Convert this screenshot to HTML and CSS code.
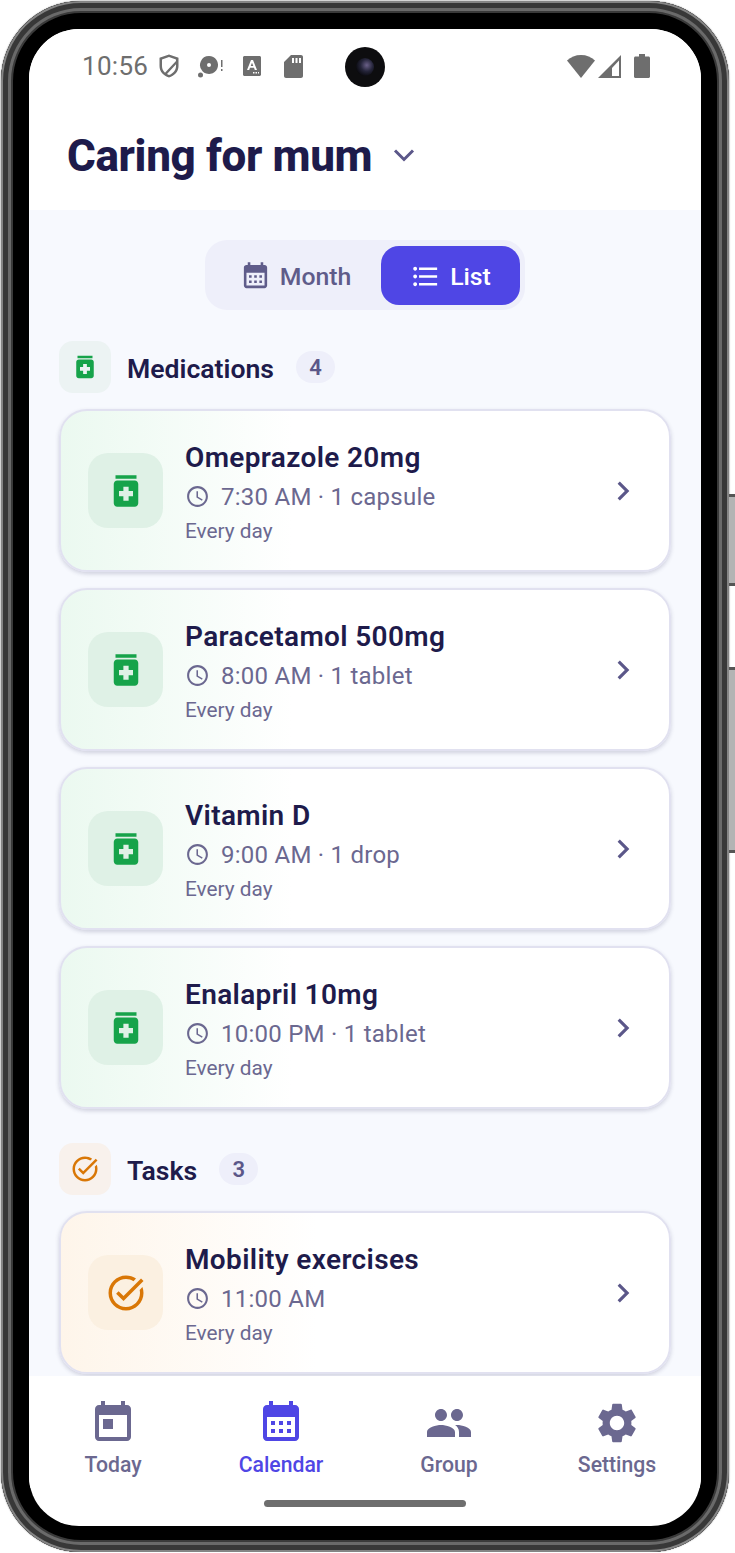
FILE: index.html
```html
<!DOCTYPE html>
<html lang="en">
<head>
  <meta charset="UTF-8" />
  <meta name="viewport" content="width=device-width, initial-scale=1.0"/>
  <title>Caring for mum</title>
  <link rel="stylesheet" href="styles.css">
</head>
<body>
  <svg class="icon-defs" aria-hidden="true">
    <symbol id="i-med" viewBox="0 0 24 24"><path d="M6 3h12v2H6zm11 3H7c-1.1 0-2 .9-2 2v11c0 1.1.9 2 2 2h10c1.1 0 2-.9 2-2V8c0-1.1-.9-2-2-2zm-1 9h-2.5v2.5h-3V15H8v-3h2.5V9.5h3V12H16v3z"/></symbol>
    <symbol id="i-task" viewBox="0 0 24 24"><path d="M22 5.18L10.59 16.6l-4.24-4.24 1.41-1.41 2.83 2.83 10-10L22 5.18zm-2.21 5.04c.13.57.21 1.17.21 1.78 0 4.42-3.58 8-8 8s-8-3.58-8-8 3.58-8 8-8c1.58 0 3.04.46 4.28 1.22l1.44-1.44C16.1 2.67 14.13 2 12 2 6.48 2 2 6.48 2 12s4.48 10 10 10 10-4.48 10-10c0-1.19-.22-2.33-.6-3.39l-1.61 1.61z"/></symbol>
    <symbol id="i-clock" viewBox="0 0 24 24"><path d="M11.99 2C6.47 2 2 6.48 2 12s4.47 10 9.99 10C17.52 22 22 17.52 22 12S17.52 2 11.99 2zM12 20c-4.42 0-8-3.58-8-8s3.58-8 8-8 8 3.58 8 8-3.58 8-8 8zm.5-13H11v6l5.25 3.15.75-1.23-4.5-2.67z"/></symbol>
    <symbol id="i-next" viewBox="0 0 24 24"><path d="M10 6L8.59 7.41 13.17 12l-4.58 4.59L10 18l6-6z"/></symbol>
    <symbol id="i-cal" viewBox="0 0 24 24"><path d="M19 3h-1V1h-2v2H8V1H6v2H5c-1.1 0-2 .9-2 2v14c0 1.1.9 2 2 2h14c1.1 0 2-.9 2-2V5c0-1.1-.9-2-2-2zm0 16H5V9h14v10zM7 11h2v2H7zm4 0h2v2h-2zm4 0h2v2h-2zM7 15h2v2H7zm4 0h2v2h-2zm4 0h2v2h-2z"/></symbol>
  </svg>

  <div class="device">
    <span class="side-btn side-btn-power"></span>
    <span class="side-btn side-btn-volume"></span>
    <div class="screen">
      <span class="camera"><span class="lens"></span></span>

      <header class="top">
        <div class="status-bar">
          <div class="status-left">
            <span class="clock">10:56</span>
            <svg class="st-shield" viewBox="0 0 22 26"><path d="M11 1.5l9.5 3.2v8.2c0 5.6-4 9.8-9.5 11.6C5.5 22.7 1.5 18.5 1.5 12.9V4.7zM4 6.5v6.4c0 2.6 1.1 5 3 6.8L18 7.9V6.4l-7-2.3zM18 11.2L9 20.9c.6.4 1.3.8 2 1.1 4.2-1.6 7-5 7-9.1z" fill-rule="evenodd"/></svg>
            <svg class="st-disc" viewBox="0 0 25 24"><path d="M11 2a9 9 0 1 1-6.5 15.2A9 9 0 0 1 11 2zm0 7a2 2 0 1 0 0 4 2 2 0 0 0 0-4z" fill-rule="evenodd"/><circle cx="2.5" cy="21" r="2.5"/><rect x="23" y="6" width="1.5" height="7"/><rect x="23" y="15" width="1.5" height="2"/></svg>
            <svg class="st-font" viewBox="0 0 18 20"><path d="M1.5 0h15c.8 0 1.5.7 1.5 1.5v17c0 .8-.7 1.5-1.5 1.5h-15C.7 20 0 19.3 0 18.500v-17C0 .7.7 0 1.5 0zM8 4l-4 10h2.2l.8-2.3h4l.8 2.3H14L10 4zm1 2.7l1.3 3.300H7.700zM10 16v1.5h1.5V16zm2.500 0v1.5H14V16zm2.500 0v1.5h1V16z" fill-rule="evenodd"/></svg>
            <svg class="st-sd" viewBox="0 0 19 23"><path d="M7 0h10c1.1 0 2 .9 2 2v19c0 1.1-.9 2-2 2H2c-1.1 0-2-.9-2-2V7zM8 3v5h2V3zm3.5 0v5h2V3zM15 3v5h2V3z" fill-rule="evenodd"/></svg>
          </div>
          <div class="status-right">
            <svg class="st-wifi" viewBox="0 0 28 23"><path d="M14 0c5.5 0 10.3 2 14 5.5L14 23 0 5.5C3.700 2 8.500 0 14 0z"/></svg>
            <svg class="st-signal" viewBox="0 0 23 23"><path d="M23 0v23H0zM21 5.5L14 13v8h7z" fill-rule="evenodd"/></svg>
            <svg class="st-battery" viewBox="0 0 16 24"><path d="M5 0h6v2.5h3.5c.8 0 1.5.7 1.5 1.5v18.500c0 .8-.7 1.500-1.500 1.500h-13C.7 24 0 23.300 0 22.500V4c0-.8.7-1.500 1.500-1.500H5z"/></svg>
          </div>
        </div>
        <div class="title-row">
          <h1>Caring for mum</h1>
          <svg class="title-caret" viewBox="0 0 22 14"><path d="M2 2.5l9 9 9-9"/></svg>
        </div>
      </header>

      <main class="content">
        <div class="segment-wrap">
          <div class="segment">
            <div class="seg-btn">
              <svg class="seg-icon"><use href="#i-cal"/></svg>
              <span>Month</span>
            </div>
            <div class="seg-btn active">
              <svg class="seg-icon" viewBox="0 0 24 24"><path d="M4 10.5c-.83 0-1.5.67-1.5 1.5s.67 1.5 1.5 1.5 1.5-.67 1.5-1.5-.67-1.5-1.5-1.5zm0-6c-.83 0-1.5.67-1.5 1.5S3.17 7.5 4 7.5 5.5 6.83 5.5 6 4.83 4.5 4 4.5zm0 12c-.83 0-1.5.68-1.5 1.5s.68 1.5 1.5 1.5 1.5-.68 1.5-1.5-.67-1.5-1.5-1.5zM7 19h14v-2H7v2zm0-6h14v-2H7v2zm0-8v2h14V5H7z"/></svg>
              <span>List</span>
            </div>
          </div>
        </div>

        <section class="section">
          <div class="section-head">
            <span class="section-icon med"><svg><use href="#i-med"/></svg></span>
            <h2>Medications</h2>
            <span class="badge">4</span>
          </div>
          <div class="card med">
            <span class="card-icon"><svg><use href="#i-med"/></svg></span>
            <div class="card-body">
              <div class="card-title">Omeprazole 20mg</div>
              <div class="card-time"><svg><use href="#i-clock"/></svg>7:30 AM · 1 capsule</div>
              <div class="card-repeat">Every day</div>
            </div>
            <svg class="card-next"><use href="#i-next"/></svg>
          </div>
          <div class="card med">
            <span class="card-icon"><svg><use href="#i-med"/></svg></span>
            <div class="card-body">
              <div class="card-title">Paracetamol 500mg</div>
              <div class="card-time"><svg><use href="#i-clock"/></svg>8:00 AM · 1 tablet</div>
              <div class="card-repeat">Every day</div>
            </div>
            <svg class="card-next"><use href="#i-next"/></svg>
          </div>
          <div class="card med">
            <span class="card-icon"><svg><use href="#i-med"/></svg></span>
            <div class="card-body">
              <div class="card-title">Vitamin D</div>
              <div class="card-time"><svg><use href="#i-clock"/></svg>9:00 AM · 1 drop</div>
              <div class="card-repeat">Every day</div>
            </div>
            <svg class="card-next"><use href="#i-next"/></svg>
          </div>
          <div class="card med">
            <span class="card-icon"><svg><use href="#i-med"/></svg></span>
            <div class="card-body">
              <div class="card-title">Enalapril 10mg</div>
              <div class="card-time"><svg><use href="#i-clock"/></svg>10:00 PM · 1 tablet</div>
              <div class="card-repeat">Every day</div>
            </div>
            <svg class="card-next"><use href="#i-next"/></svg>
          </div>
        </section>

        <section class="section">
          <div class="section-head">
            <span class="section-icon task"><svg><use href="#i-task"/></svg></span>
            <h2>Tasks</h2>
            <span class="badge">3</span>
          </div>
          <div class="card task">
            <span class="card-icon"><svg><use href="#i-task"/></svg></span>
            <div class="card-body">
              <div class="card-title">Mobility exercises</div>
              <div class="card-time"><svg><use href="#i-clock"/></svg>11:00 AM</div>
              <div class="card-repeat">Every day</div>
            </div>
            <svg class="card-next"><use href="#i-next"/></svg>
          </div>
        </section>
      </main>

      <nav class="tabbar">
        <div class="tab">
          <svg viewBox="0 0 24 24"><path d="M19 3h-1V1h-2v2H8V1H6v2H5c-1.11 0-1.99.9-1.99 2L3 19c0 1.1.89 2 2 2h14c1.1 0 2-.9 2-2V5c0-1.1-.9-2-2-2zm0 16H5V8h14v11zM7 10h5v5H7z"/></svg>
          <span>Today</span>
        </div>
        <div class="tab active">
          <svg><use href="#i-cal"/></svg>
          <span>Calendar</span>
        </div>
        <div class="tab">
          <svg viewBox="0 0 24 24"><path d="M16 11c1.66 0 2.99-1.34 2.99-3S17.66 5 16 5c-1.66 0-3 1.34-3 3s1.34 3 3 3zm-8 0c1.66 0 2.99-1.34 2.99-3S9.66 5 8 5C6.34 5 5 6.34 5 8s1.34 3 3 3zm0 2c-2.33 0-7 1.17-7 3.5V19h14v-2.5c0-2.33-4.67-3.5-7-3.5zm8 0c-.29 0-.62.02-.97.05 1.16.84 1.97 1.97 1.97 3.45V19h6v-2.5c0-2.33-4.67-3.5-7-3.5z"/></svg>
          <span>Group</span>
        </div>
        <div class="tab">
          <svg viewBox="0 0 24 24"><path d="M19.14 12.94c.04-.3.06-.61.06-.94 0-.32-.02-.64-.07-.94l2.03-1.58c.18-.14.23-.41.12-.61l-1.92-3.32c-.12-.22-.37-.29-.59-.22l-2.39.96c-.5-.38-1.03-.7-1.62-.94l-.36-2.54c-.04-.24-.24-.41-.48-.41h-3.84c-.24 0-.43.17-.47.41l-.36 2.54c-.59.24-1.13.57-1.62.94l-2.39-.96c-.22-.08-.47 0-.59.22L2.74 8.87c-.12.21-.08.47.12.61l2.03 1.58c-.05.3-.09.63-.09.94s.02.64.07.94l-2.03 1.58c-.18.14-.23.41-.12.61l1.92 3.32c.12.22.37.29.59.22l2.39-.96c.5.38 1.03.7 1.62.94l.36 2.54c.05.24.24.41.48.41h3.84c.24 0 .44-.17.47-.41l.36-2.54c.59-.24 1.13-.56 1.62-.94l2.39.96c.22.08.47 0 .59-.22l1.92-3.32c.12-.22.07-.47-.12-.61l-2.01-1.58zM12 15.6c-1.98 0-3.6-1.62-3.6-3.6s1.62-3.6 3.6-3.6 3.6 1.62 3.6 3.6-1.62 3.6-3.6 3.6z"/></svg>
          <span>Settings</span>
        </div>
      </nav>
      <div class="home-area"><span class="home-bar"></span></div>
    </div>
  </div>
</body>
</html>
```

FILE: styles.css
```css
* {
  box-sizing: border-box;
}

body {
  font-family: Roboto, "Liberation Sans", sans-serif;
  background-color: #ffffff;
  margin: 0;
  padding: 1px 0 0 1px;
  color: #1e1b4b;
}

.icon-defs {
  display: none;
}

.device {
  width: 728px;
  height: 1551px;
  padding: 28px 28px 26px 28px;
  border-radius: 80px;
  background-color: #000000;
  position: relative;
  box-shadow:
    0 0 1px 1px rgba(140, 140, 140, 0.4),
    inset 0 0 0 2px #858585,
    inset 0 0 0 7px #383838,
    inset 0 0 0 10px #6a6a6a,
    inset 0 0 0 12px #3a3a3a,
    inset 0 0 0 16px #000000;
}

.side-btn {
  position: absolute;
  right: -6px;
  width: 6px;
  background-color: #b4b4b4;
  border-top: 3px solid #555555;
  border-bottom: 3px solid #555555;
}

.side-btn-power {
  top: 493px;
  height: 92px;
}

.side-btn-volume {
  top: 666px;
  height: 186px;
}

.screen {
  width: 672px;
  height: 1497px;
  border-radius: 50px;
  background-color: #ffffff;
  overflow: hidden;
  display: flex;
  flex-direction: column;
  position: relative;
}

.camera {
  position: absolute;
  top: 18px;
  left: 316px;
  width: 40px;
  height: 40px;
  border-radius: 50%;
  background-color: #0d0d0f;
  display: flex;
  align-items: center;
  justify-content: center;
}

.lens {
  width: 18px;
  height: 18px;
  border-radius: 50%;
  background: radial-gradient(circle at 60% 40%, #6a6088 0%, #25253a 40%, #050507 80%);
}

/* header */
.top {
  height: 181px;
  flex-shrink: 0;
  background-color: #ffffff;
}

.status-bar {
  height: 76px;
  padding: 24px 51px 0 53px;
  display: flex;
  justify-content: space-between;
  color: #6e6e6e;
}

.status-bar svg {
  fill: #6e6e6e;
  display: block;
  flex-shrink: 0;
}

.status-left,
.status-right {
  display: flex;
  align-items: center;
  height: 26px;
}

.clock {
  font-size: 26px;
  letter-spacing: 0.3px;
  width: 76px;
}

.st-shield { width: 22px; height: 26px; margin-right: 18px; }
.st-disc { width: 25px; height: 24px; margin-right: 20px; }
.st-font { width: 18px; height: 20px; margin-right: 23px; }
.st-sd { width: 19px; height: 23px; }
.st-wifi { width: 28px; height: 23px; margin-right: 3px; }
.st-signal { width: 23px; height: 23px; margin-right: 13px; }
.st-battery { width: 16px; height: 24px; }

.title-row {
  display: flex;
  align-items: center;
  padding: 10px 0 0 38px;
  height: 92px;
}

.title-row h1 {
  margin: 0;
  font-size: 44px;
  font-weight: 800;
  letter-spacing: -0.36px;
  color: #1e1b4b;
}

.title-caret {
  width: 22px;
  height: 14px;
  margin-left: 21px;
  margin-top: -3px;
  fill: none;
  stroke: #5b5789;
  stroke-width: 3px;
}

/* list area */
.content {
  flex-grow: 1;
  min-height: 0;
  overflow: hidden;
  background-color: #f7f9fe;
  padding: 30px 30px 0 30px;
}

.segment-wrap {
  display: flex;
  justify-content: center;
  margin-bottom: 31px;
}

.segment {
  width: 320px;
  height: 70px;
  padding: 6px 5px 5px 5px;
  border-radius: 22px;
  background-color: #eeeffa;
  display: flex;
  justify-content: flex-end;
}

.seg-btn {
  display: flex;
  align-items: center;
  justify-content: center;
  gap: 9px;
  padding-top: 2px;
  border-radius: 18px;
  font-size: 24.8px;
  font-weight: 500;
  color: #5f5c8a;
  flex-grow: 1;
}

.seg-btn.active {
  flex: 0 0 139px;
  background-color: #4f46e5;
  color: #ffffff;
}

.seg-icon {
  width: 31px;
  height: 31px;
  fill: currentColor;
}

.section {
  margin-bottom: 34px;
}

.section-head {
  display: flex;
  align-items: center;
  height: 52px;
  margin-bottom: 16px;
}

.section-head h2 {
  margin: 2px 22px 0 16px;
  font-size: 26.6px;
  font-weight: 600;
  color: #1e1b4b;
}

.section-icon {
  width: 52px;
  height: 52px;
  border-radius: 14px;
  display: flex;
  align-items: center;
  justify-content: center;
}

.section-icon svg {
  width: 30px;
  height: 30px;
}

.section-icon.med {
  background-color: #ecf3f3;
  fill: #16a34a;
}

.section-icon.task {
  background-color: #f8f1ec;
  fill: #d97706;
}

.badge {
  width: 39px;
  height: 32px;
  border-radius: 16px;
  background-color: #eeeffa;
  color: #5b5789;
  font-size: 22px;
  font-weight: 600;
  display: flex;
  align-items: center;
  justify-content: center;
}

.card {
  height: 163px;
  margin-bottom: 16px;
  padding: 0 28px 0 27px;
  border: 2px solid #e1e1f0;
  border-radius: 28px;
  box-shadow: 0 2px 4px rgba(50, 50, 93, 0.2);
  display: flex;
  align-items: center;
}

.card.med {
  background: linear-gradient(90deg, #ebf9f0 0%, #ffffff 38%);
}

.card.task {
  background: linear-gradient(90deg, #fef5ea 0%, #ffffff 42%);
}

.section:last-child .card {
  margin-bottom: 0;
}

.card-icon {
  width: 75px;
  height: 75px;
  border-radius: 20px;
  display: flex;
  align-items: center;
  justify-content: center;
  flex-shrink: 0;
}

.card-icon svg {
  width: 42px;
  height: 42px;
}

.card.med .card-icon {
  background-color: #dff1e6;
  fill: #16a34a;
}

.card.task .card-icon {
  background-color: #fbf0e1;
  fill: #d97706;
}

.card-body {
  flex-grow: 1;
  margin-left: 22px;
  padding-top: 4px;
}

.card-title {
  font-size: 28px;
  font-weight: 600;
  letter-spacing: 0.35px;
  line-height: 36px;
  color: #1e1b4b;
}

.card-time {
  display: flex;
  align-items: center;
  gap: 11px;
  font-size: 24px;
  line-height: 32px;
  margin-top: 5px;
  color: #6b6890;
  letter-spacing: 0.25px;
}

.card-time svg {
  width: 25px;
  height: 25px;
  margin-top: -2px;
  fill: #6b6890;
}

.card-repeat {
  font-size: 20.8px;
  line-height: 28px;
  margin-top: 4px;
  color: #6b6890;
}

.card-next {
  width: 38px;
  height: 38px;
  fill: #5b5789;
  margin-right: -1px;
}

/* bottom tabs */
.tabbar {
  height: 112px;
  flex-shrink: 0;
  background-color: #ffffff;
  display: grid;
  grid-template-columns: repeat(4, 1fr);
  padding-top: 23px;
}

.tab {
  display: flex;
  flex-direction: column;
  align-items: center;
  color: #6b6890;
  font-size: 21.2px;
  font-weight: 500;
}

.tab svg {
  width: 48px;
  height: 48px;
  fill: currentColor;
  margin-bottom: 5px;
}

.tab.active {
  color: #4f46e5;
}

.home-area {
  height: 38px;
  flex-shrink: 0;
  display: flex;
  justify-content: center;
  padding-top: 12px;
}

.home-bar {
  width: 202px;
  height: 7px;
  border-radius: 4px;
  background-color: #6e6e6e;
}
```
